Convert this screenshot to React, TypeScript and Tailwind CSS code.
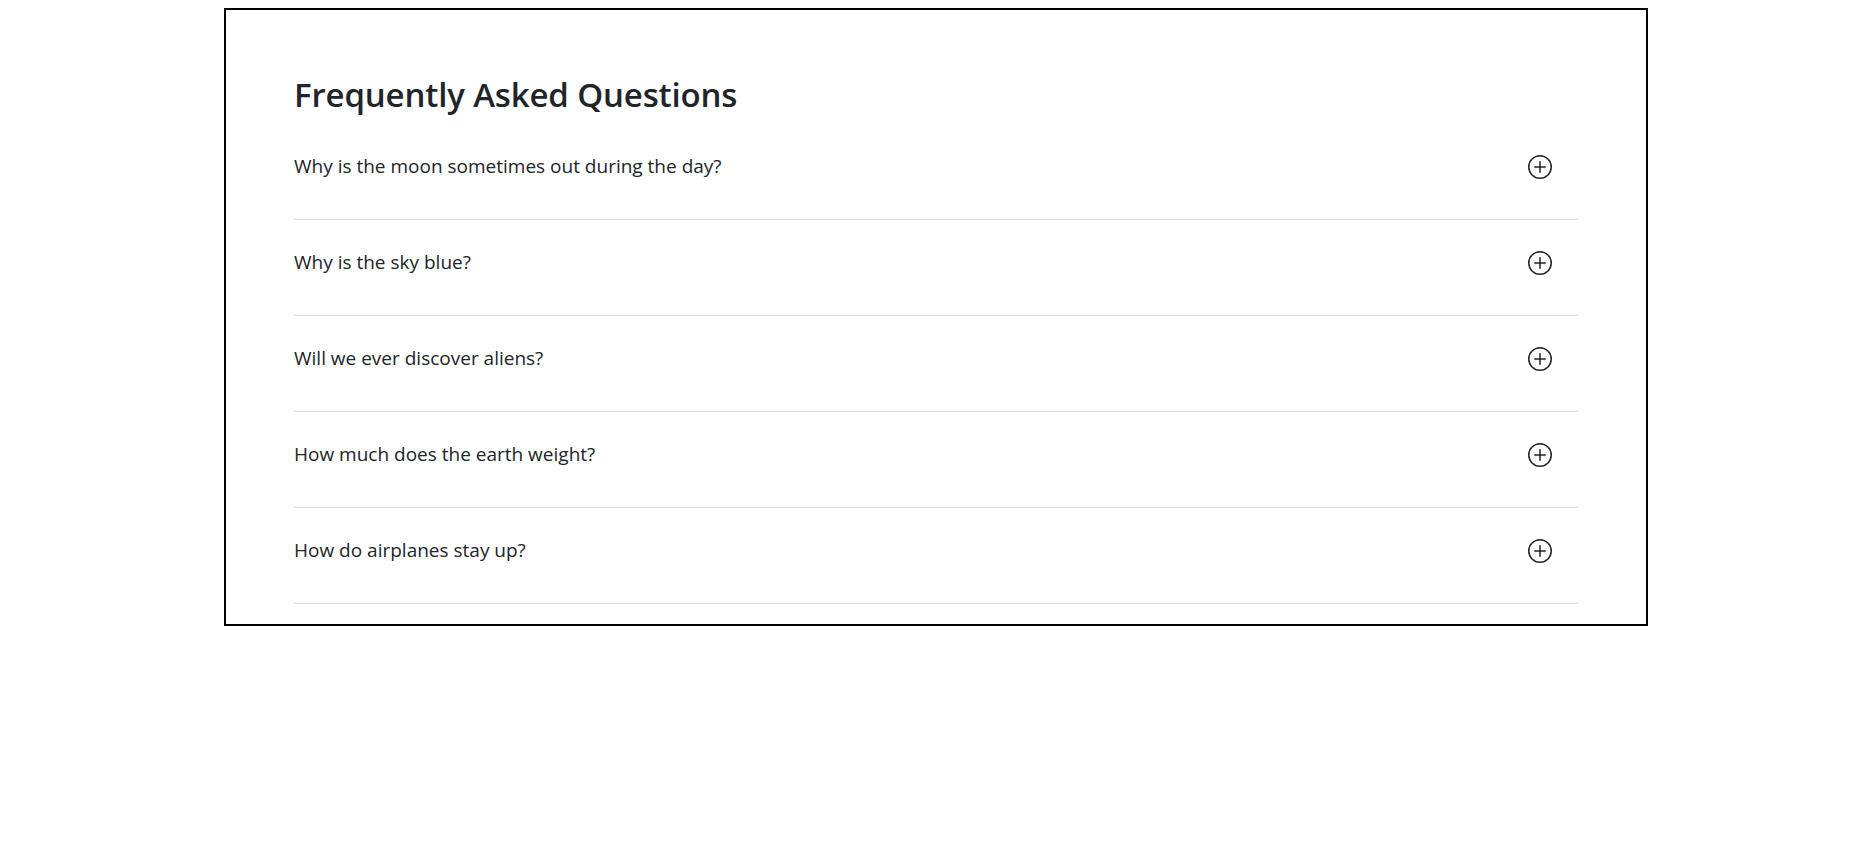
import { BsPlusCircle } from "react-icons/bs";

// 질문 목록
const questions: string[] = [
  "Why is the moon sometimes out during the day?",
  "Why is the sky blue?",
  "Will we ever discover aliens?",
  "How much does the earth weight?",
  "How do airplanes stay up?",
];

function FaqRow({ question }: { question: string }) {
  return (
    <div className="h-[96px] border-b border-[#dee2e6]">
      <button
        type="button"
        className="w-full h-[84px] flex items-center justify-between pr-[26px] text-left text-[19px] leading-[28px] text-[#212529]"
      >
        <span>{question}</span>
        <BsPlusCircle size={24} className="shrink-0 mt-[2px]" />
      </button>
    </div>
  );
}

export default function App() {
  return (
    <div className="min-h-screen bg-white font-['Open_Sans',_'Noto_Sans',_sans-serif]">
      <div className="w-[1424px] mx-auto mt-2 border-2 border-black px-[68px] pt-[63px] pb-[20px]">
        <h2 className="text-[33px] leading-[44px] font-semibold tracking-[-0.15px] text-[#212529] mb-[7px]">
          Frequently Asked Questions
        </h2>
        <div>
          {questions.map((q, index) => (
            <FaqRow key={index} question={q} />
          ))}
        </div>
      </div>
    </div>
  );
}
